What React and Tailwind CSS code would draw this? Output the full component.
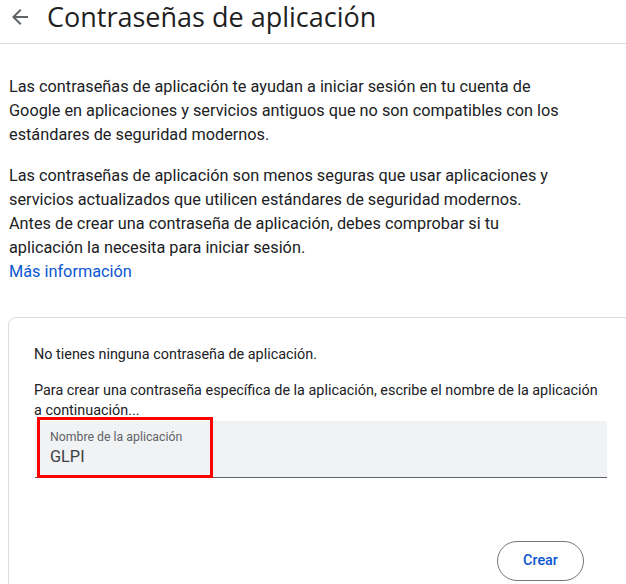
export default function App() {
  return (
    <div className="w-[626px] h-[584px] overflow-hidden bg-white text-[#202124] font-['Roboto',sans-serif]">
      <header className="h-[44px] flex items-start border-b border-[#dadce0]">
        <div className="w-[24px] h-[24px] ml-[8px] mt-[5px] text-[#5f6368]">
          <svg viewBox="0 0 24 24" className="w-[24px] h-[24px]" fill="currentColor">
            <path d="M20 11H7.83l5.59-5.59L12 4l-8 8 8 8 1.41-1.41L7.83 13H20v-2z" />
          </svg>
        </div>
        <h1 className="ml-[15px] text-[27px] leading-[34px] text-[#1f1f1f] font-['Open_Sans',sans-serif] whitespace-nowrap">
          Contraseñas de aplicación
        </h1>
      </header>

      <main className="pl-[9px] pt-[31px]">
        <p className="text-[16.3px] leading-[24px] w-[560px]">
          Las contraseñas de aplicación te ayudan a iniciar sesión en tu cuenta de Google en
          aplicaciones y servicios antiguos que no son compatibles con los estándares de seguridad
          modernos.
        </p>
        <p className="mt-[17px] text-[16.3px] leading-[24px] w-[560px]">
          Las contraseñas de aplicación son menos seguras que usar aplicaciones y servicios
          actualizados que utilicen estándares de seguridad modernos.
          <br />
          Antes de crear una contraseña de aplicación, debes comprobar si tu aplicación la necesita
          para iniciar sesión.
        </p>
        <a className="block text-[16.3px] leading-[24px] text-[#0b57d0]">Más información</a>

        <section className="mt-[33px] ml-[-1px] w-[624px] h-[300px] border border-[#dadce0] rounded-[8px] pl-[25px] pr-[24px] pt-[27px]">
          <p className="text-[14.4px] leading-[20px]">No tienes ninguna contraseña de aplicación.</p>
          <p className="mt-[16px] text-[14.4px] leading-[20px]">
            Para crear una contraseña específica de la aplicación, escribe el nombre de la aplicación
            a continuación...
          </p>
          <div className="relative h-[57px] ml-[1px] bg-[#f0f2f4] rounded-t-[4px] border-b-[1.5px] border-[#5f6368] pl-[15px] pt-[8px]">
            <div className="text-[12.3px] leading-[16px] text-[#5f6368]">Nombre de la aplicación</div>
            <div className="text-[16.3px] leading-[24px] text-[#3c4043]">GLPI</div>
            <div className="absolute left-[2px] top-[-4px] w-[176px] h-[61px] border-[3px] border-[#ff0000]" />
          </div>
          <div className="flex justify-end mt-[63px] pr-[23px]">
            <button className="h-[40px] w-[87px] rounded-full border border-[#747775] text-[14.4px] font-medium text-[#0b57d0]">
              Crear
            </button>
          </div>
        </section>
      </main>
    </div>
  );
}
